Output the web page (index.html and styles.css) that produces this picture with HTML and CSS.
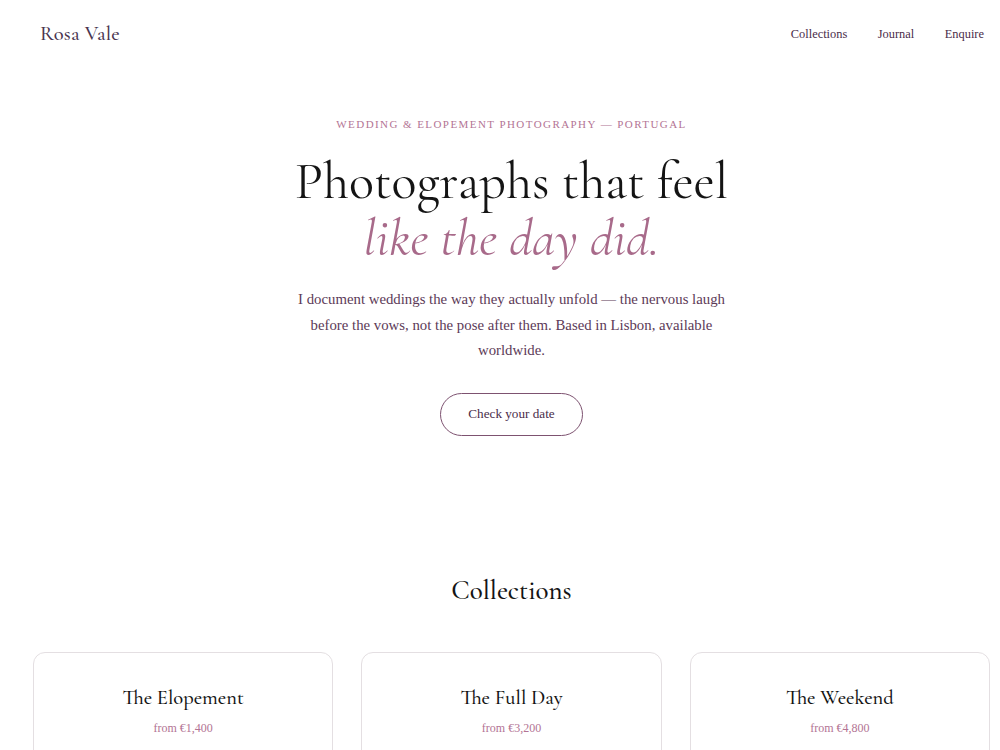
FILE: index.html
```html
<!DOCTYPE html>
<html lang="en">
<head>
<meta charset="utf-8">
<title>Rosa Vale — Wedding Photography</title>
<link rel="stylesheet" href="styles.css">
</head>
<body>
<div class="page">
  <header class="site-header">
    <a class="brand" href="#">Rosa Vale</a>
    <nav class="nav">
      <a href="#">Collections</a>
      <a href="#">Journal</a>
      <a href="#">Enquire</a>
    </nav>
  </header>

  <section class="hero">
    <p class="eyebrow">Wedding &amp; Elopement Photography — Portugal</p>
    <h1 class="hero-title">Photographs that feel<br><em>like the day did.</em></h1>
    <p class="hero-text">I document weddings the way they actually unfold — the nervous laugh before the vows, not the pose after them. Based in Lisbon, available worldwide.</p>
    <a class="btn" href="#">Check your date</a>
  </section>

  <section class="collections">
    <h2 class="section-title">Collections</h2>
    <div class="cards">
      <article class="card">
        <h3 class="card-title">The Elopement</h3>
        <p class="card-price">from €1,400</p>
      </article>
      <article class="card">
        <h3 class="card-title">The Full Day</h3>
        <p class="card-price">from €3,200</p>
      </article>
      <article class="card">
        <h3 class="card-title">The Weekend</h3>
        <p class="card-price">from €4,800</p>
      </article>
    </div>
  </section>
</div>
</body>
</html>
```

FILE: styles.css
```css
html, body {
  margin: 0;
  padding: 0;
  overflow-x: hidden;
  background: #ffffff;
}

body {
  font-family: "Liberation Serif", "Times New Roman", serif;
  color: #5a3a55;
}

.page {
  width: 1023px;
}

a {
  text-decoration: none;
  color: inherit;
}

.site-header {
  display: flex;
  justify-content: space-between;
  align-items: center;
  padding: 20px 39px 0 40px;
  height: 27px;
}

.brand {
  font-family: "Cormorant Garamond", "Cormorant", "Liberation Serif", serif;
  font-size: 20.5px;
  font-weight: 500;
  color: #4a3550;
  letter-spacing: 0.2px;
}

.nav {
  display: flex;
  gap: 30.5px;
  padding-top: 2px;
}

.nav a {
  font-size: 12.4px;
  color: #4a2c4a;
}

.hero {
  display: flex;
  flex-direction: column;
  align-items: center;
  text-align: center;
  padding-top: 71px;
}

.eyebrow {
  margin: 0;
  font-size: 11px;
  letter-spacing: 1.43px;
  text-transform: uppercase;
  color: #b37494;
}

.hero-title {
  margin: 23px 0 0;
  font-family: "Cormorant Garamond", "Cormorant", "Liberation Serif", serif;
  font-weight: 400;
  font-size: 52px;
  line-height: 57px;
  color: #141414;
}

.hero-title em {
  font-style: italic;
  color: #a86a8a;
}

.hero-text {
  margin: 20px 0 0;
  max-width: 440px;
  font-size: 14.8px;
  line-height: 25.5px;
  color: #5c3a57;
}

.btn {
  margin-top: 29px;
  display: inline-flex;
  align-items: center;
  justify-content: center;
  width: 141px;
  height: 41px;
  border: 1px solid #7d5270;
  border-radius: 22px;
  font-size: 13.2px;
  color: #4a2c4a;
}

.collections {
  padding-top: 138px;
  text-align: center;
}

.section-title {
  margin: 0;
  font-family: "Cormorant Garamond", "Cormorant", "Liberation Serif", serif;
  font-weight: 500;
  font-size: 27px;
  line-height: 34px;
  color: #141414;
}

.cards {
  display: grid;
  grid-template-columns: repeat(3, 1fr);
  gap: 28px;
  padding: 0 33px;
  margin-top: 44px;
}

.card {
  border: 1px solid #e4dfe2;
  border-radius: 12px;
  padding: 31px 20px 40px;
  min-height: 140px;
}

.card-title {
  margin: 0;
  font-family: "Cormorant Garamond", "Cormorant", "Liberation Serif", serif;
  font-weight: 500;
  font-size: 20.5px;
  line-height: 28px;
  color: #141414;
}

.card-price {
  margin: 9px 0 0;
  font-size: 12px;
  color: #b37494;
}
```
